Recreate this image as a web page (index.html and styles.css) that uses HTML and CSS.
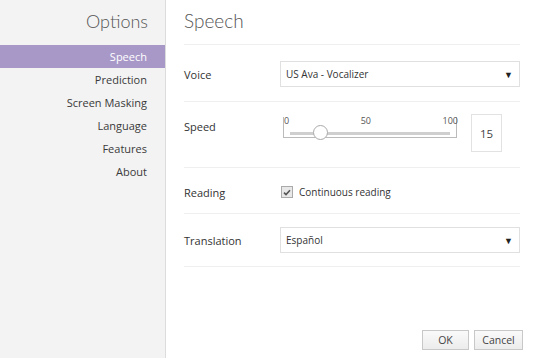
FILE: index.html
```html
<!DOCTYPE html>
<html>
<head>
<meta charset="utf-8">
<link rel="stylesheet" href="styles.css">
</head>
<body>
<div class="app">
  <nav class="sidebar">
    <div class="side-title">Options</div>
    <ul class="menu">
      <li class="item active">Speech</li>
      <li class="item">Prediction</li>
      <li class="item">Screen Masking</li>
      <li class="item">Language</li>
      <li class="item">Features</li>
      <li class="item">About</li>
    </ul>
  </nav>
  <main class="content">
    <h1 class="title">Speech</h1>
    <div class="row row-voice">
      <div class="label">Voice</div>
      <div class="select"><span>US Ava - Vocalizer</span><span class="arrow">▼</span></div>
    </div>
    <div class="row row-speed">
      <div class="label label-speed">Speed</div>
      <div class="slider">
        <div class="ticks"><span>0</span><span>50</span><span>100</span></div>
        <div class="track"><div class="thumb"></div></div>
      </div>
      <div class="num">15</div>
    </div>
    <div class="row row-reading">
      <div class="label">Reading</div>
      <label class="check"><span class="box"><svg width="8" height="7" viewBox="0 0 8 7"><path d="M1 3.6 L3 5.6 L7 1.2" fill="none" stroke="#555" stroke-width="1.6"/></svg></span>Continuous reading</label>
    </div>
    <div class="row row-trans">
      <div class="label">Translation</div>
      <div class="select"><span>Español</span><span class="arrow">▼</span></div>
    </div>
    <div class="buttons">
      <button class="btn btn-ok">OK</button>
      <button class="btn">Cancel</button>
    </div>
  </main>
</div>
</body>
</html>
```
FILE: styles.css
```css
html, body {
  margin: 0;
  padding: 0;
  background: #fff;
  font-family: "Open Sans", "Liberation Sans", sans-serif;
  color: #333;
}
.app {
  display: flex;
  width: 540px;
  height: 358px;
}
.sidebar {
  width: 165px;
  flex: none;
  background: #f3f3f3;
  border-right: 1px solid #dcdcdc;
}
.side-title {
  text-align: right;
  padding: 10px 17px 0 0;
  height: 37px;
  font-family: "Lato", "Open Sans", sans-serif;
  font-weight: 300;
  font-size: 18px;
  color: #555;
  box-sizing: border-box;
}
.menu {
  list-style: none;
  margin: 8px 0 0;
  padding: 0;
}
.item {
  height: 23px;
  line-height: 23px;
  text-align: right;
  padding-right: 18px;
  font-size: 11px;
  color: #3a3a3a;
}
.item.active {
  background: #a898c8;
  color: #fff;
}
.content {
  flex: 1;
  padding: 0 20px 0 18px;
  position: relative;
}
.title {
  margin: 0;
  height: 45px;
  box-sizing: border-box;
  padding-top: 9px;
  font-family: "Lato", "Open Sans", sans-serif;
  font-weight: 300;
  font-size: 19px;
  color: #555;
  border-bottom: 1px solid #efefef;
}
.row {
  display: flex;
  align-items: center;
  border-bottom: 1px solid #efefef;
  font-size: 11px;
  box-sizing: border-box;
}
.label {
  width: 96px;
  flex: none;
  color: #333;
}
.row-voice { height: 57px; padding-top: 2px; }
.row-speed {
  height: 66px;
  align-items: flex-start;
  padding-top: 12px;
}
.label-speed { margin-top: 5px; }
.row-reading { height: 46px; padding-top: 3px; }
.row-trans { height: 53px; }
.select {
  flex: 1;
  height: 26px;
  border: 1px solid #e0e0e0;
  box-sizing: border-box;
  display: flex;
  align-items: center;
  justify-content: space-between;
  padding: 0 6px 0 5px;
  font-size: 10px;
  color: #333;
}
.arrow {
  font-size: 9px;
  color: #222;
}
.slider {
  width: 174px;
  height: 21px;
  margin-left: 3px;
  margin-top: 3px;
  border: 1px solid #bbb;
  border-top: none;
  box-sizing: border-box;
  position: relative;
}
.ticks {
  display: flex;
  justify-content: space-between;
  font-size: 9px;
  line-height: 9px;
  color: #555;
  margin: -1px -2px 0 0;
}
.track {
  position: absolute;
  left: 6px;
  right: 6px;
  top: 15px;
  height: 3px;
  background: #cfcfcf;
}
.thumb {
  position: absolute;
  left: 23px;
  top: -7px;
  width: 15px;
  height: 15px;
  border: 1px solid #aaa;
  border-radius: 50%;
  background: #fff;
  box-sizing: border-box;
}
.num {
  margin-left: 14px;
  width: 31px;
  height: 38px;
  border: 1px solid #e2e2e2;
  box-sizing: border-box;
  display: flex;
  align-items: center;
  justify-content: center;
  font-size: 11.5px;
  color: #444;
}
.check {
  display: flex;
  align-items: center;
  font-size: 10px;
  color: #333;
}
.box {
  width: 10px;
  height: 10px;
  border: 1px solid #aaa;
  background: #e8e8e8;
  margin: 0 6px 0 1px;
  display: flex;
  align-items: center;
  justify-content: center;
}
.buttons {
  position: absolute;
  right: 17px;
  bottom: 8px;
  display: flex;
  gap: 5px;
}
.btn {
  height: 20px;
  padding: 0;
  border: 1px solid #c8c8c8;
  background: linear-gradient(#fafafa, #ececec);
  font-family: "Open Sans", sans-serif;
  font-size: 10.5px;
  color: #444;
  width: 49px;
}
.btn-ok { width: 47px; }
```
